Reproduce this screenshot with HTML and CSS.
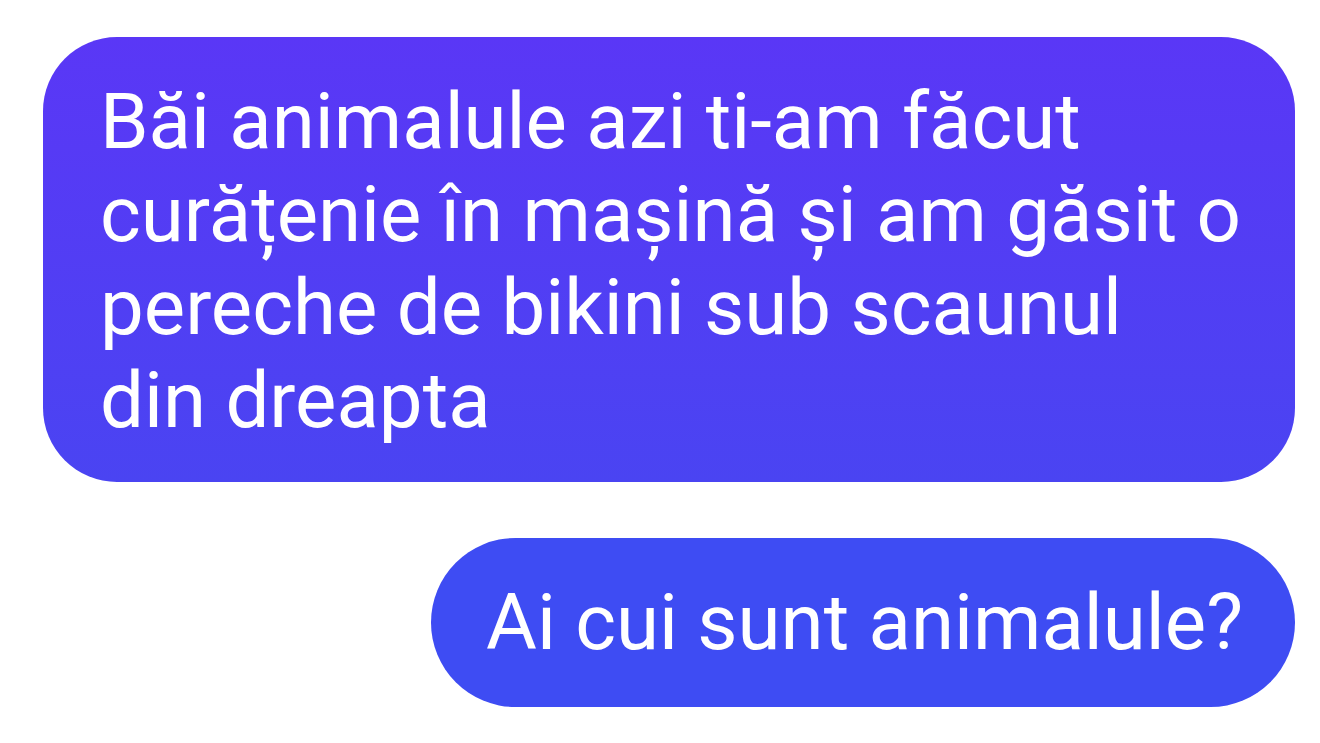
FILE: index.html
```html
<!DOCTYPE html>
<html lang="ro">
<head>
<meta charset="utf-8">
<title>Chat</title>
<link rel="stylesheet" href="styles.css">
</head>
<body>
<main class="chat">
  <div class="bubble bubble-first">Băi animalule azi ti-am făcut curățenie în mașină și am găsit o pereche de bikini sub scaunul din&nbsp;dreapta</div>
  <div class="bubble bubble-second">Ai cui sunt animalule?</div>
</main>
</body>
</html>
```
FILE: styles.css
```css
html, body {
  margin: 0;
  padding: 0;
  background: #ffffff;
}
body {
  width: 1320px;
  height: 743px;
  overflow: hidden;
  font-family: Roboto, "Noto Sans", sans-serif;
}
.chat {
  display: flex;
  flex-direction: column;
  align-items: flex-end;
  gap: 56px;
  padding: 37px 25px 0 43px;
}
.bubble {
  color: #ffffff;
  font-size: 78px;
  line-height: 93px;
  box-sizing: border-box;
}
.bubble-first {
  width: 100%;
  padding: 38px 30px 35px 57px;
  border-radius: 74px;
  background: linear-gradient(180deg, #5a37f6 0%, #4a44f2 100%);
}
.bubble-second {
  height: 169px;
  padding: 38px 52px 0 55px;
  border-radius: 85px;
  background: #3e4cf3;
}
```
